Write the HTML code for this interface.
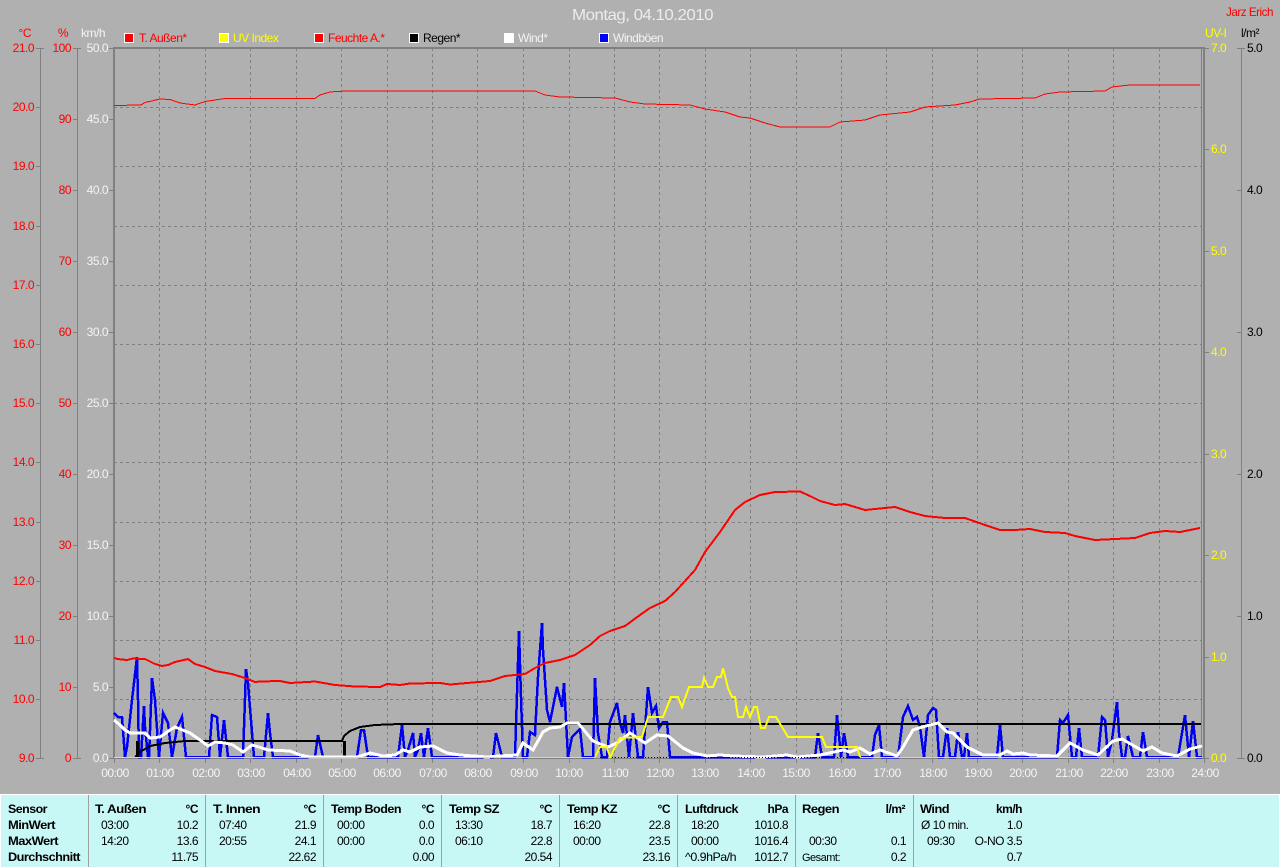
<!DOCTYPE html>
<html><head><meta charset="utf-8"><title>Montag, 04.10.2010</title>
<style>
html,body{margin:0;padding:0;background:#b0b0b0;width:1280px;height:867px;overflow:hidden}
svg{display:block;font-family:"Liberation Sans",sans-serif;font-size:12px;letter-spacing:-.5px}
.r{text-anchor:end}.c{text-anchor:middle}
.red{fill:#f00}.yel{fill:#ff0}.wh{fill:#f4f4f4}.bl{fill:#000}
.b{font-weight:bold}
.l{fill:none;stroke-linejoin:miter;shape-rendering:crispEdges}
.g{shape-rendering:crispEdges}
</style></head><body>
<svg width="1280" height="867" viewBox="0 0 1280 867" xmlns="http://www.w3.org/2000/svg">
<rect width="1280" height="867" fill="#b0b0b0"/>
<text x="572" y="20" font-size="16" fill="#ececec" textLength="141" lengthAdjust="spacingAndGlyphs">Montag, 04.10.2010</text>
<text x="1273" y="16" class="r red" textLength="47" lengthAdjust="spacingAndGlyphs">Jarz Erich</text>

<!-- grid -->
<g class="g" stroke="#808080" stroke-width="1" stroke-dasharray="3 3" fill="none">
<path d="M159.5 48V758M205.5 48V758M250.5 48V758M296.5 48V758M341.5 48V758M387.5 48V758M432.5 48V758M477.5 48V758M523.5 48V758M569.5 48V758M614.5 48V758M659.5 48V758M705.5 48V758M750.5 48V758M796.5 48V758M841.5 48V758M886.5 48V758M932.5 48V758M977.5 48V758M1022.5 48V758M1068.5 48V758M1113.5 48V758M1159.5 48V758"/>
<path d="M114 107.5H1202M114 166.5H1202M114 226.5H1202M114 285.5H1202M114 344.5H1202M114 403.5H1202M114 462.5H1202M114 522.5H1202M114 581.5H1202M114 640.5H1202M114 699.5H1202"/>
</g>
<!-- plot frame -->
<g fill="#808080">
<rect x="113" y="47" width="1091" height="2"/>
<rect x="113" y="47" width="2" height="712"/>
<rect x="1203" y="47" width="2" height="712"/>
<rect x="1201" y="48" width="1" height="710"/>
<rect x="114" y="758" width="1091" height="1"/>
</g>
<!-- axes -->
<g class="g" stroke="#808080" stroke-width="1" fill="none">
<path d="M40.5 48V758M77.5 48V758M1241.5 48V758"/>
<path d="M36 48.5H44M36 107.5H40M36 166.5H40M36 226.5H40M36 285.5H40M36 344.5H40M36 403.5H40M36 462.5H40M36 522.5H40M36 581.5H40M36 640.5H40M36 699.5H40M36 758.5H44"/>
<path d="M73 48.5H81M73 119.5H77M73 190.5H77M73 261.5H77M73 332.5H77M73 403.5H77M73 474.5H77M73 545.5H77M73 616.5H77M73 687.5H77M73 758.5H81"/>
<path d="M109 48.5H114M109 119.5H114M109 190.5H114M109 261.5H114M109 332.5H114M109 403.5H114M109 474.5H114M109 545.5H114M109 616.5H114M109 687.5H114M109 758.5H114"/>
<path d="M1204 48.5H1209M1204 149.5H1209M1204 251.5H1209M1204 352.5H1209M1204 454.5H1209M1204 555.5H1209M1204 657.5H1209M1204 758.5H1209"/>
<path d="M1237 48.5H1245M1237 190.5H1241M1237 332.5H1241M1237 474.5H1241M1237 616.5H1241M1237 758.5H1245"/>
<path d="M114.5 758V763M159.5 758V763M205.5 758V763M250.5 758V763M296.5 758V763M341.5 758V763M387.5 758V763M432.5 758V763M477.5 758V763M523.5 758V763M569.5 758V763M614.5 758V763M659.5 758V763M705.5 758V763M750.5 758V763M796.5 758V763M841.5 758V763M886.5 758V763M932.5 758V763M977.5 758V763M1022.5 758V763M1068.5 758V763M1113.5 758V763M1159.5 758V763M1204.5 758V763"/>
</g>

<!-- axis labels -->
<g class="r red">
<text x="31" y="37">°C</text><text x="68" y="37">%</text>
<text x="34" y="52">21.0</text><text x="34" y="111">20.0</text><text x="34" y="170">19.0</text><text x="34" y="230">18.0</text><text x="34" y="289">17.0</text><text x="34" y="348">16.0</text><text x="34" y="407">15.0</text><text x="34" y="466">14.0</text><text x="34" y="526">13.0</text><text x="34" y="585">12.0</text><text x="34" y="644">11.0</text><text x="34" y="703">10.0</text><text x="34" y="762">9.0</text>
<text x="71" y="52">100</text><text x="71" y="123">90</text><text x="71" y="194">80</text><text x="71" y="265">70</text><text x="71" y="336">60</text><text x="71" y="407">50</text><text x="71" y="478">40</text><text x="71" y="549">30</text><text x="71" y="620">20</text><text x="71" y="691">10</text><text x="71" y="762">0</text>
</g>
<g class="r wh">
<text x="105" y="37">km/h</text>
<text x="108" y="52">50.0</text><text x="108" y="123">45.0</text><text x="108" y="194">40.0</text><text x="108" y="265">35.0</text><text x="108" y="336">30.0</text><text x="108" y="407">25.0</text><text x="108" y="478">20.0</text><text x="108" y="549">15.0</text><text x="108" y="620">10.0</text><text x="108" y="691">5.0</text><text x="108" y="762">0.0</text>
</g>
<g class="yel">
<text x="1205" y="37">UV-I</text>
<text x="1211" y="52">7.0</text><text x="1211" y="153">6.0</text><text x="1211" y="255">5.0</text><text x="1211" y="356">4.0</text><text x="1211" y="458">3.0</text><text x="1211" y="559">2.0</text><text x="1211" y="661">1.0</text><text x="1211" y="762">0.0</text>
</g>
<g class="bl">
<text x="1241" y="37">l/m²</text>
<text x="1247" y="52">5.0</text><text x="1247" y="194">4.0</text><text x="1247" y="336">3.0</text><text x="1247" y="478">2.0</text><text x="1247" y="620">1.0</text><text x="1247" y="762">0.0</text>
</g>
<g class="c wh">
<text x="115" y="777">00:00</text><text x="160" y="777">01:00</text><text x="206" y="777">02:00</text><text x="251" y="777">03:00</text><text x="297" y="777">04:00</text><text x="342" y="777">05:00</text><text x="387" y="777">06:00</text><text x="433" y="777">07:00</text><text x="478" y="777">08:00</text><text x="524" y="777">09:00</text><text x="569" y="777">10:00</text><text x="615" y="777">11:00</text><text x="660" y="777">12:00</text><text x="705" y="777">13:00</text><text x="751" y="777">14:00</text><text x="796" y="777">15:00</text><text x="842" y="777">16:00</text><text x="887" y="777">17:00</text><text x="933" y="777">18:00</text><text x="978" y="777">19:00</text><text x="1023" y="777">20:00</text><text x="1069" y="777">21:00</text><text x="1114" y="777">22:00</text><text x="1160" y="777">23:00</text><text x="1205" y="777">24:00</text>
</g>

<!-- legend -->
<g class="g" stroke="#fff" stroke-width="1">
<rect x="124.5" y="33.5" width="9" height="9" fill="#f00"/>
<rect x="219.5" y="33.5" width="9" height="9" fill="#ff0"/>
<rect x="314.5" y="33.5" width="9" height="9" fill="#f00"/>
<rect x="409.5" y="33.5" width="9" height="9" fill="#000"/>
<rect x="504.5" y="33.5" width="9" height="9" fill="#fff"/>
<rect x="599.5" y="33.5" width="9" height="9" fill="#00f"/>
</g>
<text x="139" y="42" class="red">T. Außen*</text>
<text x="233" y="42" class="yel">UV Index</text>
<text x="328" y="42" class="red">Feuchte A.*</text>
<text x="423" y="42" class="bl">Regen*</text>
<text x="518" y="42" class="wh">Wind*</text>
<text x="613" y="42" class="wh">Windböen</text>

<!-- gusts -->
<polyline class="l" stroke="#0000f0" stroke-width="2.5" points="114,713 118,717 122,717 125,757 127,747 132,700 137,657 138,700 139,757 141,757 144,706 145,727 148,757 149,757 152,678 155,700 159,757 163,713 168,723 172,757 177,728 182,717 186,757 209,757 212,715 217,717 220,757 224,720 228,757 243,757 246,669 248,683 254,757 264,757 268,713 270,733 273,757 315,757 318,735 323,757 357,757 361,730 364,730 368,757 398,757 402,725 405,757 408,750 413,733 415,757 418,750 421,733 424,757 428,728 432,757 493,757 496,733 502,757 515,757 519,631 521,697 523,757 527,757 530,732 535,735 538,677 542,623 543,650 547,710 550,722 557,687 562,707 564,683 568,757 572,737 580,729 583,757 593,757 595,678 598,733 602,757 607,757 610,722 617,703 620,723 623,733 625,715 629,757 633,713 638,757 643,757 648,687 652,713 656,706 659,728 663,722 667,722 670,757 815,757 818,733 822,757 834,757 837,715 841,757 844,733 848,757 872,757 875,735 879,725 882,757 898,757 903,717 908,706 913,720 917,717 920,727 924,757 928,715 933,708 936,710 939,757 943,757 947,728 950,757 955,757 958,732 962,757 964,757 967,733 969,757 997,757 1000,725 1003,757 1057,757 1060,720 1063,723 1068,715 1072,757 1076,757 1079,728 1082,757 1098,757 1102,717 1105,720 1108,757 1112,740 1117,702 1119,733 1122,757 1125,757 1128,736 1133,757 1140,757 1143,732 1147,757 1178,757 1185,715 1189,757 1193,721 1197,757 1202,757"/>
<!-- rain -->
<polyline class="l" stroke="#000" stroke-width="2" points="135,757 140,752 150,746 165,743 185,741 342,741 344,736 350,731 360,727 375,725 400,724 1201,724"/>
<rect x="136" y="741" width="3" height="17" fill="#000"/>
<rect x="343" y="741" width="3" height="17" fill="#000"/>
<!-- wind -->
<polyline class="l" stroke="#fff" stroke-width="3" points="114,720 120,725 125,730 130,733 145,733 150,738 160,737 170,730 175,727 190,733 200,740 208,746 215,742 225,743 233,745 243,752 252,745 262,748 268,750 290,751 300,755 310,757 357,757 370,753 383,756 395,755 403,750 410,752 420,747 433,746 447,753 460,755 487,757 500,756 517,755 523,743 533,750 543,732 550,728 560,727 567,723 578,723 593,741 608,747 617,743 630,733 645,743 657,735 668,736 683,748 693,753 707,756 720,755 733,756 763,757 787,755 797,757 820,755 843,750 850,752 860,748 870,754 880,750 897,756 903,747 913,730 922,727 938,723 947,732 953,733 967,747 983,755 1000,755 1007,751 1013,754 1023,753 1030,755 1057,756 1070,743 1083,750 1098,755 1113,741 1122,739 1143,751 1152,747 1162,753 1177,756 1190,749 1202,746"/>
<!-- baseline -->
<path class="g" d="M600 757.5H860" stroke="#000" stroke-width="1" stroke-dasharray="1 2"/>
<path class="g" d="M114 757.5H595M860 757.5H1202" stroke="#f0f000" stroke-width="1"/>
<!-- UV -->
<polyline class="l" stroke="#ff0" stroke-width="2" points="595,757 600,747 607,747 610,757 620,738 642,737 648,717 663,717 671,697 678,697 682,707 689,687 702,687 704,678 708,687 713,687 717,677 721,677 723,668 728,688 732,697 735,697 738,717 743,717 746,707 750,717 754,707 757,707 761,728 765,728 769,717 776,717 788,737 822,737 826,747 857,747 860,757"/>
<!-- humidity -->
<polyline class="l" stroke="#f00" stroke-width="2" points="114,657.5 117,659 127,660 133,658.5 145,659 155,664 162,666 168,665 175,662 188,659 195,664 205,667 215,671 232,674 245,678 255,682 260,681.5 280,681 290,683 315,681.5 335,685 355,686.5 380,687 387,684 400,685 410,683.5 440,683 450,684.5 490,681 505,676 525,674 535,668 545,663 560,660 575,655 590,645 600,636 610,631 625,626 640,615 650,608 665,601 675,592 685,581 695,570 705,552 720,532 735,510 745,502 760,495 775,492 800,491.5 810,496 820,501 835,505 845,504 865,510 895,507 910,512 925,516 945,518 965,518 985,525 1000,530 1015,530 1030,529 1045,532 1065,533 1075,536 1095,540 1115,539 1135,538 1150,533 1165,531 1180,532 1200,528"/>
<!-- temperature -->
<polyline class="l" stroke="#f00" stroke-width="1" points="114,105.5 141,105 145,102.5 160,99 170,99.5 180,103 195,105 205,101.5 225,98.5 315,98.5 320,95 330,92 345,91 535,91 545,95 560,97 615,98 630,102 645,104 690,105 705,109 725,112 740,117 750,118 765,123 780,127 830,127 840,122 865,120 880,115 910,112 925,107 955,105 970,102 980,99 1035,98 1045,94 1060,92 1105,91 1112,87 1130,85 1200,85"/>

<!-- bottom panel -->
<rect x="0" y="794" width="1280" height="73" fill="#c8f8f6"/>
<rect x="0" y="794" width="1280" height="1" fill="#fff"/>
<rect x="0" y="794" width="1" height="73" fill="#fff"/>
<rect x="1279" y="794" width="1" height="73" fill="#fff"/>
<g fill="#a0a0a0">
<rect x="88" y="795" width="1" height="72"/><rect x="205" y="795" width="1" height="72"/><rect x="323" y="795" width="1" height="72"/><rect x="441" y="795" width="1" height="72"/><rect x="559" y="795" width="1" height="72"/><rect x="677" y="795" width="1" height="72"/><rect x="795" y="795" width="1" height="72"/><rect x="913" y="795" width="1" height="72"/>
</g>
<g class="bl">
<g class="b">
<text x="8" y="813" textLength="39" lengthAdjust="spacingAndGlyphs">Sensor</text><text x="8" y="829" textLength="47" lengthAdjust="spacingAndGlyphs">MinWert</text><text x="8" y="845" textLength="50" lengthAdjust="spacingAndGlyphs">MaxWert</text><text x="8" y="861" textLength="72" lengthAdjust="spacingAndGlyphs">Durchschnitt</text>
<text x="95" y="813" textLength="51" lengthAdjust="spacingAndGlyphs">T. Außen</text><text x="198" y="813" class="r">°C</text>
<text x="213" y="813" textLength="47" lengthAdjust="spacingAndGlyphs">T. Innen</text><text x="316" y="813" class="r">°C</text>
<text x="331" y="813" textLength="70" lengthAdjust="spacingAndGlyphs">Temp Boden</text><text x="434" y="813" class="r">°C</text>
<text x="449" y="813" textLength="50" lengthAdjust="spacingAndGlyphs">Temp SZ</text><text x="552" y="813" class="r">°C</text>
<text x="567" y="813" textLength="50" lengthAdjust="spacingAndGlyphs">Temp KZ</text><text x="670" y="813" class="r">°C</text>
<text x="685" y="813" textLength="53" lengthAdjust="spacingAndGlyphs">Luftdruck</text><text x="788" y="813" class="r">hPa</text>
<text x="802" y="813" textLength="37" lengthAdjust="spacingAndGlyphs">Regen</text><text x="905" y="813" class="r">l/m²</text>
<text x="920" y="813" textLength="29" lengthAdjust="spacingAndGlyphs">Wind</text><text x="1022" y="813" class="r">km/h</text>
</g>
<text x="101" y="829">03:00</text><text x="198" y="829" class="r">10.2</text>
<text x="101" y="845">14:20</text><text x="198" y="845" class="r">13.6</text>
<text x="198" y="861" class="r">11.75</text>
<text x="219" y="829">07:40</text><text x="316" y="829" class="r">21.9</text>
<text x="219" y="845">20:55</text><text x="316" y="845" class="r">24.1</text>
<text x="316" y="861" class="r">22.62</text>
<text x="337" y="829">00:00</text><text x="434" y="829" class="r">0.0</text>
<text x="337" y="845">00:00</text><text x="434" y="845" class="r">0.0</text>
<text x="434" y="861" class="r">0.00</text>
<text x="455" y="829">13:30</text><text x="552" y="829" class="r">18.7</text>
<text x="455" y="845">06:10</text><text x="552" y="845" class="r">22.8</text>
<text x="552" y="861" class="r">20.54</text>
<text x="573" y="829">16:20</text><text x="670" y="829" class="r">22.8</text>
<text x="573" y="845">00:00</text><text x="670" y="845" class="r">23.5</text>
<text x="670" y="861" class="r">23.16</text>
<text x="691" y="829">18:20</text><text x="788" y="829" class="r">1010.8</text>
<text x="691" y="845">00:00</text><text x="788" y="845" class="r">1016.4</text>
<text x="685" y="861" textLength="51" lengthAdjust="spacingAndGlyphs">^0.9hPa/h</text><text x="788" y="861" class="r">1012.7</text>
<text x="809" y="845">00:30</text><text x="906" y="845" class="r">0.1</text>
<text x="802" y="861" font-size="11" textLength="38" lengthAdjust="spacingAndGlyphs">Gesamt:</text><text x="906" y="861" class="r">0.2</text>
<text x="921" y="829">Ø 10 min.</text><text x="1022" y="829" class="r">1.0</text>
<text x="927" y="845">09:30</text><text x="1022" y="845" class="r">O-NO 3.5</text>
<text x="1022" y="861" class="r">0.7</text>
</g>
</svg>
</body></html>
